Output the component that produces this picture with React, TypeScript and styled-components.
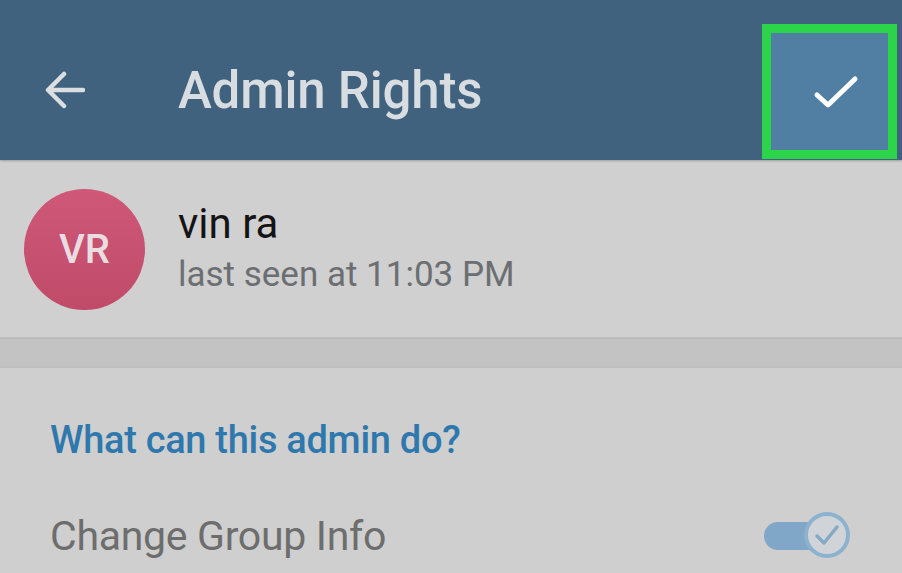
import React from "react";
import styled, { createGlobalStyle } from "styled-components";

const GlobalStyle = createGlobalStyle`
  html, body {
    margin: 0;
    padding: 0;
    background: #cfcfcf;
    font-family: Roboto, "Liberation Sans", sans-serif;
  }
`;

const Page = styled.div`
  width: 902px;
  height: 573px;
  overflow: hidden;
  background: #cfcfcf;
`;

const Toolbar = styled.header`
  height: 160px;
  box-sizing: border-box;
  padding: 20px 5px 0 45px;
  background: #41627f;
  display: flex;
  align-items: center;
  box-shadow: 0 1px 2px rgba(0, 0, 0, 0.25);
  position: relative;
`;

const BackButton = styled.div`
  width: 40px;
  height: 38px;
  display: flex;
  align-items: center;
  justify-content: center;
`;

const Title = styled.h1`
  margin: 0 0 0 93px;
  flex: 1;
  font-size: 51px;
  font-weight: 500;
  color: #d8dde1;
  letter-spacing: -0.2px;
`;

const DoneButton = styled.div`
  width: 135px;
  height: 135px;
  margin-top: 2px;
  box-sizing: border-box;
  border: 9px solid #2bd448;
  background: #517ea3;
  display: flex;
  align-items: center;
  justify-content: center;
  padding: 2px 0 0 12px;
`;

const ProfileRow = styled.div`
  height: 177px;
  box-sizing: border-box;
  padding-left: 24px;
  display: flex;
  align-items: center;
  gap: 33px;
  background: #d0d0d0;
`;

const Avatar = styled.div`
  width: 121px;
  height: 121px;
  border-radius: 50%;
  background: linear-gradient(180deg, #cf5878 0%, #c04b69 100%);
  color: #e9dde2;
  font-size: 40px;
  font-weight: 500;
  display: flex;
  align-items: center;
  justify-content: center;
  margin-top: 2px;
`;

const ProfileText = styled.div`
  display: flex;
  flex-direction: column;
  margin-top: -2px;
`;

const Name = styled.div`
  font-size: 42px;
  color: #141414;
  line-height: 46px;
`;

const Status = styled.div`
  font-size: 35px;
  color: #6c6f72;
  line-height: 40px;
  margin-top: 8px;
`;

const Divider = styled.div`
  height: 31px;
  box-sizing: border-box;
  background: #c3c3c3;
  border-top: 2px solid #bbbbbb;
  border-bottom: 2px solid #bebebe;
`;

const Section = styled.section`
  padding: 0 52px 0 50px;
`;

const SectionTitle = styled.h2`
  margin: 50px 0 0;
  font-size: 38px;
  font-weight: 500;
  color: #2e78ad;
  line-height: 44px;
  letter-spacing: -0.3px;
`;

const OptionRow = styled.div`
  display: flex;
  align-items: center;
  justify-content: space-between;
  margin-top: 50px;
`;

const OptionLabel = styled.span`
  font-size: 41px;
  color: #6d6d6d;
  letter-spacing: -0.3px;
`;

const Switch = styled.div`
  position: relative;
  width: 86px;
  height: 48px;
`;

const Track = styled.div`
  position: absolute;
  left: 0;
  top: 10px;
  width: 70px;
  height: 28px;
  border-radius: 14px;
  background: #80a7c7;
`;

const Knob = styled.div`
  position: absolute;
  right: 0;
  top: 0;
  width: 46px;
  height: 46px;
  box-sizing: border-box;
  border-radius: 50%;
  border: 4px solid #8db2cf;
  background: #d0d4d8;
  display: flex;
  align-items: center;
  justify-content: center;
`;

const App = () => {
  return (
    <Page>
      <GlobalStyle />
      <Toolbar>
        <BackButton>
          <svg width="40" height="38" viewBox="0 0 40 38" fill="none">
            <path
              d="M38 19 H4 M19 3 L3 19 L19 35"
              stroke="#dcdfe2"
              strokeWidth="4.5"
              strokeLinecap="round"
              strokeLinejoin="round"
            />
          </svg>
        </BackButton>
        <Title>Admin Rights</Title>
        <DoneButton>
          <svg width="46" height="34" viewBox="0 0 46 34" fill="none">
            <path
              d="M4 20 L15 30 L42 4"
              stroke="#ffffff"
              strokeWidth="5"
              strokeLinecap="round"
              strokeLinejoin="round"
            />
          </svg>
        </DoneButton>
      </Toolbar>
      <ProfileRow>
        <Avatar>VR</Avatar>
        <ProfileText>
          <Name>vin ra</Name>
          <Status>last seen at 11:03 PM</Status>
        </ProfileText>
      </ProfileRow>
      <Divider />
      <Section>
        <SectionTitle>What can this admin do?</SectionTitle>
        <OptionRow>
          <OptionLabel>Change Group Info</OptionLabel>
          <Switch>
            <Track />
            <Knob>
              <svg width="26" height="22" viewBox="0 0 26 22" fill="none">
                <path
                  d="M3 12 L10 19 L23 3"
                  stroke="#86a9c5"
                  strokeWidth="3.5"
                  strokeLinecap="round"
                  strokeLinejoin="round"
                />
              </svg>
            </Knob>
          </Switch>
        </OptionRow>
      </Section>
    </Page>
  );
};

export default App;
